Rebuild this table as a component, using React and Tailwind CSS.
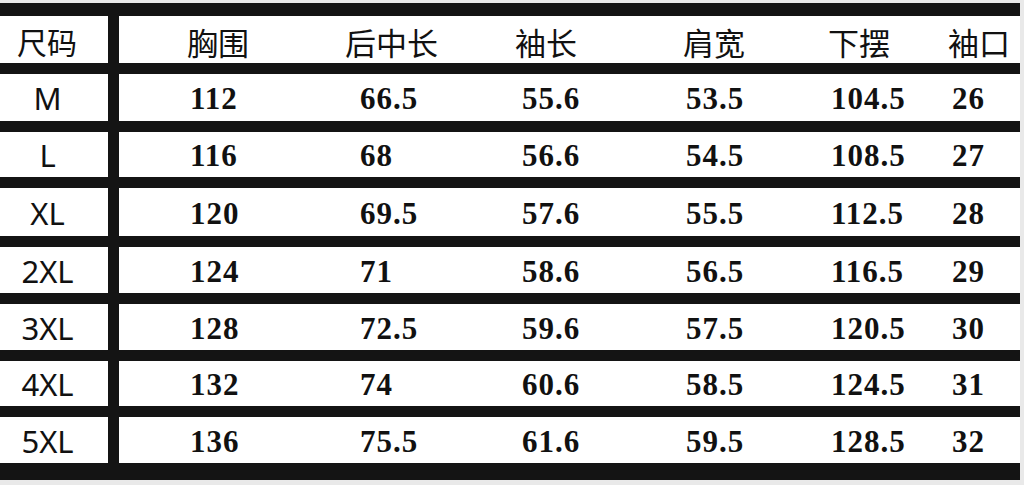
import React from "react";

const headers = [
  { t: "胸围", c: "ml-[-3px]" },
  { t: "后中长", c: "ml-[-15px]" },
  { t: "袖长", c: "ml-[-7px]" },
  { t: "肩宽", c: "ml-[-3px]" },
  { t: "下摆", c: "ml-[-3px]" },
  { t: "袖口", c: "ml-[-4px]" },
];

const colW = ["w-[170px]", "w-[162px]", "w-[164px]", "w-[145px]", "w-[121px]", "flex-1"];

const rows = [
  { h: "h-[47px]", s: "M", v: ["112", "66.5", "55.6", "53.5", "104.5", "26"] },
  { h: "h-[45px]", s: "L", v: ["116", "68", "56.6", "54.5", "108.5", "27"] },
  { h: "h-[48px]", s: "XL", v: ["120", "69.5", "57.6", "55.5", "112.5", "28"] },
  { h: "h-[46px]", s: "2XL", v: ["124", "71", "58.6", "56.5", "116.5", "29"] },
  { h: "h-[46px]", s: "3XL", v: ["128", "72.5", "59.6", "57.5", "120.5", "30"] },
  { h: "h-[45px]", s: "4XL", v: ["132", "74", "60.6", "58.5", "124.5", "31"] },
  { h: "h-[46px]", s: "5XL", v: ["136", "75.5", "61.6", "59.5", "128.5", "32"] },
];

const cjk = { fontFamily: '"Noto Sans CJK SC", "Noto Sans", sans-serif' };
const sans = { fontFamily: '"Noto Sans", "Liberation Sans", sans-serif' };
const serif = { fontFamily: '"Liberation Serif", "DejaVu Serif", serif' };

export default function App() {
  return (
    <div className="w-[1024px] h-[485px] bg-[#e9e9e9] pt-[3px] overflow-hidden">
      <div className="w-[1020px] bg-[#141414] pt-[13px] pb-[17px] flex flex-col gap-[11px]">
        {/* header */}
        <div className="h-[47px] flex gap-[11px]">
          <div className="w-[108px] bg-white flex items-center justify-center pr-[14px] text-[30px] leading-none text-[#111] pt-[3px]" style={cjk}>
            尺码
          </div>
          <div className="flex-1 bg-white flex items-center pl-[71px] pt-[3px]">
            {headers.map((h, i) => (
              <div key={i} className={`${colW[i]} text-[31px] leading-none text-[#111]`} style={cjk}>
                <span className={`inline-block ${h.c}`}>{h.t}</span>
              </div>
            ))}
          </div>
        </div>
        {rows.map((r, ri) => (
          <div key={ri} className={`${r.h} flex gap-[11px]`}>
            <div className="w-[108px] bg-white flex items-center justify-center pr-[13px] text-[31px] leading-none text-[#111] pt-[2px]" style={sans}>
              {r.s}
            </div>
            <div className="flex-1 bg-white flex items-center pl-[71px] pt-[2px]">
              {r.v.map((v, i) => (
                <div key={i} className={`${colW[i]} text-[31px] font-bold leading-none text-[#111] tracking-[1px]`} style={serif}>
                  {v}
                </div>
              ))}
            </div>
          </div>
        ))}
      </div>
    </div>
  );
}
